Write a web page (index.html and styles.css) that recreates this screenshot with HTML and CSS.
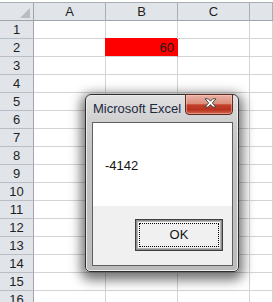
FILE: index.html
```html
<!DOCTYPE html>
<html>
<head>
<meta charset="utf-8">
<link rel="stylesheet" href="styles.css">
</head>
<body>
<div class="sheet">
  <div class="row head">
    <div class="rh corner"><span class="tri"></span></div>
    <div class="ch">A</div><div class="ch">B</div><div class="ch">C</div><div class="ch"></div>
  </div>
  <div class="row"><div class="rh">1</div><div class="c"></div><div class="c"></div><div class="c"></div><div class="c"></div></div>
  <div class="row"><div class="rh">2</div><div class="c"></div><div class="c fill">60</div><div class="c"></div><div class="c"></div></div>
  <div class="row"><div class="rh">3</div><div class="c"></div><div class="c"></div><div class="c"></div><div class="c"></div></div>
  <div class="row"><div class="rh">4</div><div class="c"></div><div class="c"></div><div class="c"></div><div class="c"></div></div>
  <div class="row"><div class="rh">5</div><div class="c"></div><div class="c"></div><div class="c"></div><div class="c"></div></div>
  <div class="row"><div class="rh">6</div><div class="c"></div><div class="c"></div><div class="c"></div><div class="c"></div></div>
  <div class="row"><div class="rh">7</div><div class="c"></div><div class="c"></div><div class="c"></div><div class="c"></div></div>
  <div class="row"><div class="rh">8</div><div class="c"></div><div class="c"></div><div class="c"></div><div class="c"></div></div>
  <div class="row"><div class="rh">9</div><div class="c"></div><div class="c"></div><div class="c"></div><div class="c"></div></div>
  <div class="row"><div class="rh">10</div><div class="c"></div><div class="c"></div><div class="c"></div><div class="c"></div></div>
  <div class="row"><div class="rh">11</div><div class="c"></div><div class="c"></div><div class="c"></div><div class="c"></div></div>
  <div class="row"><div class="rh">12</div><div class="c"></div><div class="c"></div><div class="c"></div><div class="c"></div></div>
  <div class="row"><div class="rh">13</div><div class="c"></div><div class="c"></div><div class="c"></div><div class="c"></div></div>
  <div class="row"><div class="rh">14</div><div class="c"></div><div class="c"></div><div class="c"></div><div class="c"></div></div>
  <div class="row"><div class="rh">15</div><div class="c"></div><div class="c"></div><div class="c"></div><div class="c"></div></div>
  <div class="row"><div class="rh">16</div><div class="c"></div><div class="c"></div><div class="c"></div><div class="c"></div></div>
</div>

<div class="dialog">
  <div class="titlebar">
    <span class="title">Microsoft Excel</span>
    <div class="close">
      <svg width="13" height="10" viewBox="0 0 13 10">
        <path d="M1 0.8 L4.3 0.8 L6.5 3.2 L8.7 0.8 L12 0.8 L8.3 4.9 L12 9 L8.7 9 L6.5 6.6 L4.3 9 L1 9 L4.7 4.9 Z" fill="#ffffff" stroke="#4a4a4a" stroke-width="1" stroke-linejoin="round"/>
      </svg>
    </div>
  </div>
  <div class="client">
    <div class="msg">-4142</div>
    <div class="actions">
      <div class="ok"><span class="focus">OK</span></div>
    </div>
  </div>
</div>
</body>
</html>
```
FILE: styles.css
```css
html, body {
  margin: 0;
  padding: 0;
  background: #ffffff;
  overflow: hidden;
  width: 273px;
  height: 302px;
}
body {
  font-family: "Liberation Sans", Arial, sans-serif;
  position: relative;
}
.sheet {
  margin-top: 2px;
  border-top: 1px solid #a9aeb4;
}
.row {
  display: grid;
  grid-template-columns: 34px 72px 72px 72px 1fr;
  height: 18px;
}
.row > div {
  box-sizing: border-box;
  border-right: 1px solid #d4d4d4;
  border-bottom: 1px solid #d4d4d4;
  font-size: 13px;
  line-height: 17px;
  color: #1e1e1e;
}
.rh {
  background: #e1e5ea;
  text-align: center;
  border-right-color: #9ea4ab !important;
  border-bottom-color: #b9bec4 !important;
}
.head .ch {
  background: #e1e5ea;
  text-align: center;
  border-right-color: #a9aeb4;
  border-bottom-color: #9ea4ab;
}
.head .rh {
  border-bottom-color: #9ea4ab !important;
}
.corner {
  position: relative;
}
.tri {
  position: absolute;
  right: 3px;
  bottom: 2px;
  width: 0;
  height: 0;
  border-left: 10px solid transparent;
  border-bottom: 10px solid #b9bdc2;
}
.c.fill {
  background: #ff0000;
  border-right-color: #ff0000;
  box-shadow: -1px -1px 0 0 #ff0000;
  position: relative;
  text-align: right;
  padding-right: 3px;
  color: #1a1a1a;
}

.dialog {
  position: absolute;
  left: 85px;
  top: 94px;
  width: 154px;
  height: 178px;
  box-sizing: border-box;
  border: 1px solid #2e2e2e;
  border-radius: 6px 6px 5px 5px;
  background: linear-gradient(to bottom, #e2e2e2 0px, #cfcfcf 26px, #c2c2c2 60px, #bcbcbc 100%);
  box-shadow: 0 4px 12px 4px rgba(0, 0, 0, 0.55), inset 0 0 0 1px #ececec;
  padding: 0 5px 5px 6px;
}
.titlebar {
  height: 27px;
  position: relative;
  margin: 0 -5px 0 -6px;
  padding-left: 7px;
}
.title {
  font-size: 13px;
  line-height: 27px;
  color: #1b2a40;
}
.close {
  position: absolute;
  top: -1px;
  right: 5px;
  width: 48px;
  height: 21px;
  box-sizing: border-box;
  border: 1px solid #5e2a21;
  border-radius: 0 0 4px 4px;
  background: linear-gradient(to bottom, #eab3a6 0%, #dc8f7c 45%, #c2412b 52%, #b8321d 78%, #d36a55 100%);
  box-shadow: inset 0 0 0 1px rgba(255, 210, 200, 0.45);
  display: flex;
  align-items: flex-start;
  justify-content: center;
  padding-top: 3px;
  padding-left: 2px;
}
.close svg {
  display: block;
}
.client {
  border: 1px solid #5f5f5f;
  height: 144px;
  box-sizing: border-box;
  display: flex;
  flex-direction: column;
}
.msg {
  background: #ffffff;
  height: 83px;
  box-sizing: border-box;
  padding: 35px 0 0 12px;
  font-size: 13px;
  line-height: 15px;
  color: #141414;
}
.actions {
  flex: 1;
  background: #f0f0f0;
  display: flex;
  justify-content: flex-end;
  align-items: flex-start;
  padding: 13px 9px 0 0;
}
.ok {
  width: 88px;
  height: 32px;
  box-sizing: border-box;
  border: 1px solid #3f3f3f;
  background: #f0f0f0;
  box-shadow: inset 0 0 0 1px #8e8e8e, inset 0 0 0 2px #b4b4b4, inset 1px 1px 0 3px #fafafa;
  padding: 3px;
  display: flex;
}
.focus {
  flex: 1;
  border: 1px dotted #000000;
  font-size: 13px;
  line-height: 22px;
  text-align: center;
  color: #141414;
}
```
